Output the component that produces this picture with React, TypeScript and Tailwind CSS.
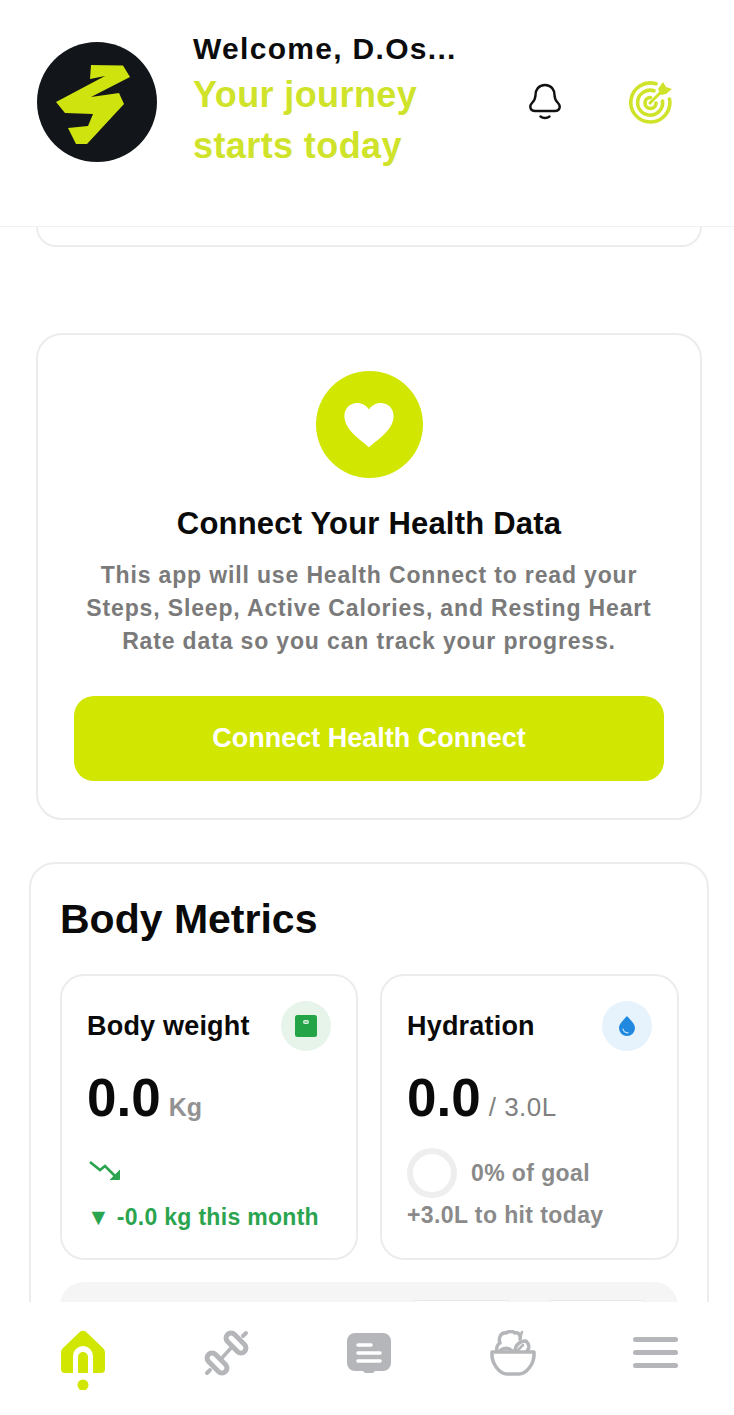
import React from "react";

const LIME = "#d1e600";

const Logo = () => (
  <svg width="120" height="120" viewBox="0 0 120 120" className="shrink-0">
    <circle cx="60" cy="60" r="60" fill="#12151a" />
    <polygon
      fill="#cfe30f"
      points="54,23 86,23.5 93,35 54,55 82,51 87,62 50,102 39,102 31,86 51,84 56,72 28,71 19,60 68,34 53,37"
    />
  </svg>
);

const BellIcon = () => (
  <svg width="34" height="38" viewBox="0 0 34 38" fill="none" stroke="#111" strokeWidth="2.400" strokeLinecap="round" strokeLinejoin="round">
    <path d="M17 2C10.500 2 7.500 7 7.500 12c0 4-1 5.500-3.500 8-3 3-2 8 3 8h20c5 0 6-5 3-8-2.500-2.500-3.500-4-3.500-8 0-5-3-10-9.500-10z" />
    <path d="M12.500 33.500c2.500 2 6.500 2 9 0" />
  </svg>
);

const TargetIcon = () => (
  <svg width="44" height="44" viewBox="0 0 44 44" fill="none" stroke="#cfe32a" strokeWidth="3.600" strokeLinecap="round">
    <path d="M27 3.800A19.500 19.500 0 1 0 40.500 19" />
    <path d="M25 10.800A12.500 12.500 0 1 0 33.500 21" />
    <path d="M21.500 17.500A5.500 5.500 0 1 0 27 23" />
    <path d="M21 23 32 12" strokeWidth="3" />
    <path d="M29 9l5-7 3 5 6 2-6 5-5 1z" fill="#cfe32a" stroke="none" />
  </svg>
);

const ScaleIcon = () => (
  <svg width="22" height="22" viewBox="0 0 22 22">
    <rect width="22" height="22" rx="2.500" fill="#22a447" />
    <rect x="8" y="5" width="6" height="4" rx="2" fill="#dff3e4" />
    <rect x="9.500" y="6.500" width="3" height="1" fill="#22a447" />
  </svg>
);

const DropIcon = () => (
  <svg width="18" height="22" viewBox="0 0 18 22">
    <path d="M9 1c3 3.500 8 7.500 8 12a8 8 0 0 1-16 0C1 8.500 6 4.500 9 1z" fill="#2188e0" />
    <path d="M5 14c.5 2.500 2.500 3.800 5 3.800" fill="none" stroke="#cfe6fa" strokeWidth="1.200" strokeLinecap="round" />
  </svg>
);

const TrendIcon = () => (
  <svg width="32" height="22" viewBox="0 0 32 22" fill="none" stroke="#2aa44f" strokeWidth="2.600">
    <path d="M1 2l10 8 5-4 12 12" />
    <path d="M21 19.500h9.500V10" fill="#2aa44f" strokeWidth="1" />
  </svg>
);

const HomeIcon = () => (
  <svg width="46" height="60" viewBox="0 0 46 60">
    <path d="M19.500 2.200a5 5 0 0 1 7 0L43 18a6 6 0 0 1 2 4.500V39a4 4 0 0 1-4 4H33V26a10 10 0 0 0-20 0v17H5a4 4 0 0 1-4-4V22.500A6 6 0 0 1 3 18z" fill={LIME} />
    <path d="M18 43V27a5 5 0 0 1 10 0v16z" fill={LIME} />
    <circle cx="23" cy="55" r="5.500" fill={LIME} />
  </svg>
);

const DumbbellIcon = () => (
  <svg width="46" height="46" viewBox="0 0 46 46" fill="none" stroke="#b4b6b9" strokeLinecap="round" strokeLinejoin="round">
    <path d="M17 29 27 18" strokeWidth="3.500" />
    <rect x="27" y="1" width="10" height="24" rx="5" transform="rotate(-45 32 13)" strokeWidth="5" />
    <rect x="8" y="21" width="10" height="24" rx="5" transform="rotate(-45 13 33)" strokeWidth="5" />
    <path d="M39 6l3-3M3 43l3-3" strokeWidth="4" />
  </svg>
);

const ChatIcon = () => (
  <svg width="46" height="42" viewBox="0 0 46 42" className="mt-[2px] -ml-[1px]">
    <path d="M9 1h28a8 8 0 0 1 8 8v22a8 8 0 0 1-8 8h-8l-2 2h-8l-2-2H9a8 8 0 0 1-8-8V9a8 8 0 0 1 8-8z" fill="#b4b6b9" />
    <path d="M12 13h13M12 21h22M12 29h22" stroke="#fff" strokeWidth="3.500" strokeLinecap="round" />
  </svg>
);

const BowlIcon = () => (
  <svg width="46" height="46" viewBox="0 0 46 46" fill="none" stroke="#b4b6b9" strokeWidth="3.500" strokeLinecap="round" strokeLinejoin="round">
    <path d="M2 22h42c1 12-8 22-15 22H17C10 44 1 34 2 22z" />
    <path d="M7 21c-1-4 1-7 3-8-2-5 1-11 6-10 3-2 7-2 9 0 4-1 6 3 5 6" />
    <path d="M10 21c2-3 8-4 12 0" />
    <path d="M25 21c0-6 5-10 11-10 3 3 4 7 1 10" />
    <path d="M30 8l2-6M27 21l6-6" strokeWidth="2.500" />
  </svg>
);

const MenuIcon = () => (
  <div className="flex flex-col gap-2 w-[45px]">
    <div className="h-[5px] rounded-full bg-[#b4b6b9]" />
    <div className="h-[5px] rounded-full bg-[#b4b6b9]" />
    <div className="h-[5px] rounded-full bg-[#b4b6b9]" />
  </div>
);

const App = () => {
  return (
    <div className="h-[1415px] w-[734px] flex flex-col overflow-hidden bg-white font-['Liberation_Sans',sans-serif]">
      {/* Header */}
      <header className="h-[227px] shrink-0 border-b border-[#f1f1f1] flex items-start pl-[37px] pt-[42px]">
        <Logo />
        <div className="ml-[36px] w-[325px] -mt-[12px]">
          <p className="text-[30px] leading-[38px] font-bold tracking-[1.3px] text-[#0c0c0c] whitespace-nowrap">
            Welcome, D.Os...
          </p>
          <p className="mt-[1px] text-[36px] leading-[51px] font-bold tracking-[0.4px] text-[#cfe32a]">
            Your journey
            <br />
            starts today
          </p>
        </div>
        <div className="mt-[41px] ml-[10px]">
          <BellIcon />
        </div>
        <div className="mt-[38px] ml-[67px]">
          <TargetIcon />
        </div>
      </header>

      {/* Scroll content */}
      <main className="flex-1 min-h-0 overflow-hidden">
        <div className="ml-[36px] mr-[32px] h-[20px] border-2 border-t-0 border-[#ececec] rounded-b-[24px]" />

        <section className="ml-[36px] mr-[32px] mt-[86px] h-[487px] border-2 border-[#ececec] rounded-[26px] flex flex-col items-center px-[36px] pt-[36px]">
          <div className="w-[107px] h-[107px] rounded-full flex items-center justify-center bg-[#d1e600]">
            <svg width="52" height="46" viewBox="0 0 24 21.500" fill="#fff">
              <path d="M12 21.200C9 18 .5 13.500.5 6.500.5 3 3.200.5 6.500.5c2.300 0 4.300 1.200 5.500 3 1.200-1.800 3.200-3 5.500-3 3.300 0 6 2.500 6 6 0 7-8.500 11.500-11.500 14.700z" />
            </svg>
          </div>
          <h2 className="mt-[28px] text-[31px] leading-[36px] font-bold tracking-[0.2px] text-[#0a0a0a] whitespace-nowrap">
            Connect Your Health Data
          </h2>
          <p className="mt-[17px] w-[620px] text-center text-[23px] leading-[33px] font-bold tracking-[0.85px] text-[#7a7a7a]">
            This app will use Health Connect to read your
            <br />
            Steps, Sleep, Active Calories, and Resting Heart
            <br />
            Rate data so you can track your progress.
          </p>
          <button className="mt-[38px] w-full h-[85px] shrink-0 rounded-[20px] bg-[#d1e600] text-white text-[27px] font-bold">
            Connect Health Connect
          </button>
        </section>

        <section className="ml-[29px] mr-[25px] mt-[42px] h-[500px] border-2 border-[#ececec] rounded-[26px] pl-[29px] pr-[29px] pt-[31px]">
          <h2 className="text-[41px] leading-[48px] font-bold text-[#0a0a0a]">Body Metrics</h2>

          <div className="mt-[31px] grid grid-cols-[298px_299px] gap-x-[22px]">
            {/* Body weight */}
            <div className="h-[286px] border-2 border-[#ececec] rounded-[24px] px-[25px] pt-[25px]">
              <div className="flex items-center justify-between">
                <span className="text-[27px] leading-[50px] font-bold tracking-[0.2px] text-[#0a0a0a]">Body weight</span>
                <div className="w-[50px] h-[50px] rounded-full bg-[#e7f4ea] flex items-center justify-center">
                  <ScaleIcon />
                </div>
              </div>
              <div className="mt-[17px] flex items-baseline">
                <span className="text-[53px] leading-[60px] font-bold text-[#0a0a0a]">0.0</span>
                <span className="ml-[8px] text-[25px] font-bold text-[#929292]">Kg</span>
              </div>
              <div className="mt-[32px] ml-[2px] h-[22px]">
                <TrendIcon />
              </div>
              <p className="mt-[19px] text-[23px] leading-[32px] font-bold tracking-[0.3px] text-[#2aa44f] whitespace-nowrap">
                ▼ -0.0 kg this month
              </p>
            </div>

            {/* Hydration */}
            <div className="h-[286px] border-2 border-[#ececec] rounded-[24px] px-[25px] pt-[25px]">
              <div className="flex items-center justify-between">
                <span className="text-[27px] leading-[50px] font-bold tracking-[0.2px] text-[#0a0a0a]">Hydration</span>
                <div className="w-[50px] h-[50px] rounded-full bg-[#e6f2fc] flex items-center justify-center">
                  <DropIcon />
                </div>
              </div>
              <div className="mt-[17px] flex items-baseline">
                <span className="text-[53px] leading-[60px] font-bold text-[#0a0a0a]">0.0</span>
                <span className="ml-[8px] text-[26px] font-normal tracking-[0.5px] text-[#808080]">/ 3.0L</span>
              </div>
              <div className="mt-[20px] flex items-center gap-[14px]">
                <div className="w-[50px] h-[50px] rounded-full border-[6px] border-[#eeeeee]" />
                <span className="text-[23px] font-bold tracking-[0.4px] text-[#8a8a8a]">0% of goal</span>
              </div>
              <p className="mt-[1px] text-[23px] leading-[32px] font-bold tracking-[0.4px] text-[#8a8a8a] whitespace-nowrap">
                +3.0L to hit today
              </p>
            </div>
          </div>

          <div className="mt-[22px] h-[100px] rounded-[24px] bg-[#f5f5f5] flex justify-end gap-[28px] pr-[28px] pt-[18px]">
            <div className="w-[107px] h-[40px] rounded-[10px] bg-white border border-[#e8e8e8]" />
            <div className="w-[107px] h-[40px] rounded-[10px] bg-white border border-[#e8e8e8]" />
          </div>
        </section>
      </main>

      {/* Bottom nav */}
      <nav className="h-[113px] shrink-0 bg-white flex items-start justify-between pl-[60px] pr-[56px] pt-[28px]">
        <HomeIcon />
        <DumbbellIcon />
        <ChatIcon />
        <BowlIcon />
        <div className="pt-[7px]">
          <MenuIcon />
        </div>
      </nav>
    </div>
  );
};

export default App;
